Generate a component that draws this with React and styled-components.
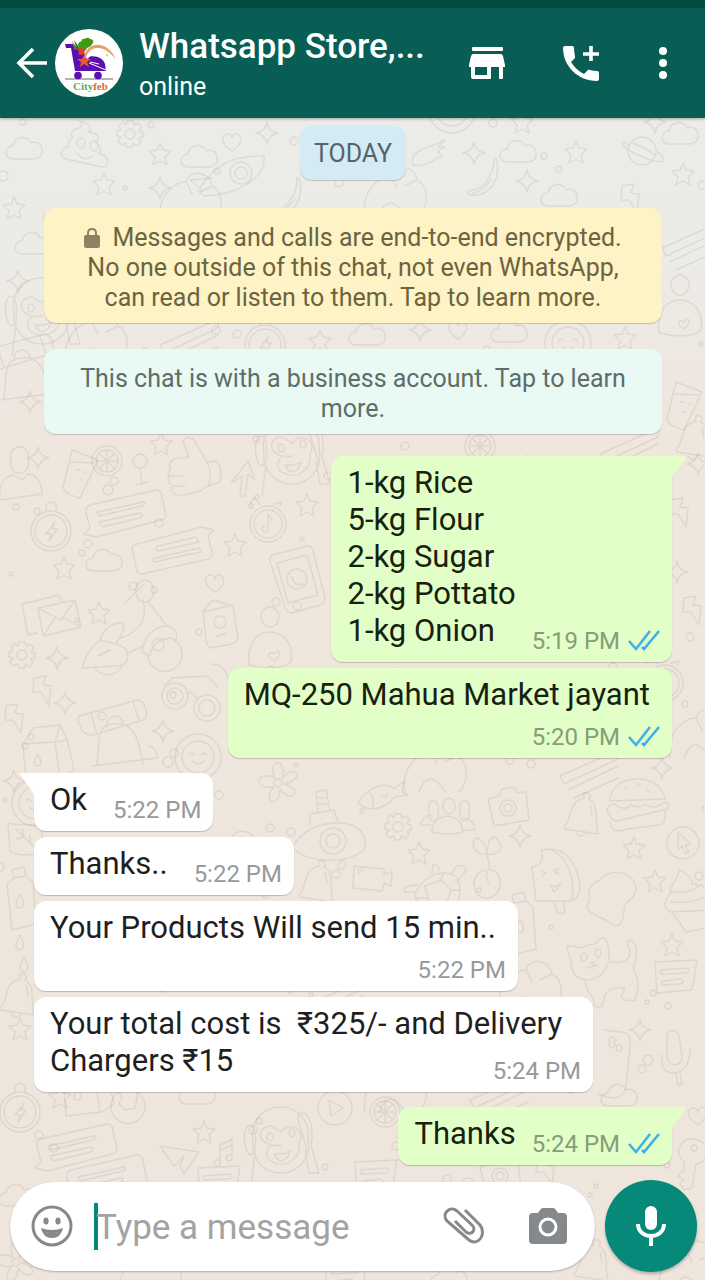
import React from "react";
import styled, { createGlobalStyle } from "styled-components";

const GlobalStyle = createGlobalStyle`
  * { box-sizing: border-box; }
  body { margin: 0; font-family: Roboto, "Noto Sans", sans-serif; }
  button { font: inherit; color: inherit; background: none; border: 0; padding: 0; cursor: pointer; }
  svg { display: block; }
`;

const Screen = styled.div`
  display: flex;
  flex-direction: column;
  min-height: 100vh;
`;

const Header = styled.header`
  position: relative;
  z-index: 1;
  display: flex;
  align-items: center;
  height: 118px;
  padding: 0 16px;
  border-top: 8px solid #044c42;
  background: #085e54;
  color: #fff;
  box-shadow: 0 1px 3px rgba(0, 0, 0, 0.3);
`;

const IconButton = styled.button`
  display: grid;
  place-items: center;
  flex: none;
  width: ${(p) => p.$w}px;
  height: 48px;
`;

const Avatar = styled.svg`
  flex: none;
  width: 68px;
  height: 68px;
  margin-left: 8px;
`;

const Contact = styled.div`
  flex: 1;
  min-width: 0;
  margin-left: 16px;
  padding-top: 4px;
`;

const Name = styled.h1`
  margin: 0;
  font-size: 35px;
  font-weight: 500;
  line-height: 44px;
  white-space: nowrap;
`;

const Presence = styled.p`
  margin: 0;
  font-size: 25px;
  line-height: 36px;
`;

const Actions = styled.div`
  display: flex;
  gap: 46px;
  margin-right: 14px;
`;

const Main = styled.main`
  position: relative;
  display: flex;
  flex: 1;
  flex-direction: column;
  background: linear-gradient(#ebece8 0, #ecebe6 150px, #efe6de 300px, #eee5dd 100%);
`;

const Wallpaper = styled.svg`
  position: absolute;
  inset: 0;
  width: 100%;
  height: 100%;
  fill: none;
  stroke: #8c8478;
  stroke-opacity: 0.16;
  stroke-width: 1.4;
  stroke-linejoin: round;
  stroke-linecap: round;
`;

const Thread = styled.section`
  position: relative;
  display: flex;
  flex: 1;
  flex-direction: column;
  padding: 8px 33px 15px 34px;
`;

const DateChip = styled.time`
  align-self: center;
  padding: 13px 14px 11px;
  border-radius: 12px;
  background: #d4eaf4;
  color: #55636a;
  font-size: 25px;
  line-height: 30px;
  box-shadow: 0 1px 1px rgba(0, 0, 0, 0.18);
`;

const Notice = styled.button`
  margin: ${(p) => p.$top}px 10px 0;
  padding: 15px 28px 10px;
  border-radius: 12px;
  background: ${(p) => p.$bg};
  color: ${(p) => p.$color};
  font-size: 25px;
  line-height: 30px;
  text-align: center;
  box-shadow: 0 1px 1px rgba(0, 0, 0, 0.18);
  svg { display: inline-block; margin-right: 12px; vertical-align: -2px; }
`;

const Bubble = styled.article`
  position: relative;
  display: ${(p) => (p.$layout === "wrapped" ? "flow-root" : "flex")};
  flex-direction: ${(p) => (p.$layout === "stacked" ? "column" : "row")};
  align-items: flex-end;
  align-self: ${(p) => (p.$out ? "flex-end" : "flex-start")};
  gap: ${(p) => (p.$layout === "stacked" ? 4 : p.$out ? 16 : 26)}px;
  max-width: 559px;
  margin-top: ${(p) => (p.$first ? 15 : 6)}px;
  padding: 8px 12px 7px 16px;
  border-radius: 12px;
  border-top-${(p) => (p.$out ? "right" : "left")}-radius: ${(p) => (p.$first ? 0 : 12)}px;
  background: ${(p) => (p.$out ? "#e1ffc7" : "#fff")};
  color: ${(p) => (p.$out ? "#18210f" : "#1f1f1f")};
  font-size: 31px;
  line-height: 37px;
  box-shadow: 0 1px 1px rgba(0, 0, 0, 0.2);
`;

const Tail = styled.svg`
  position: absolute;
  top: 0;
  ${(p) => (p.$out ? "right" : "left")}: -14px;
  width: 15px;
  height: 22px;
  fill: ${(p) => (p.$out ? "#e1ffc7" : "#fff")};
  transform: ${(p) => (p.$out ? "none" : "scaleX(-1)")};
`;

const Text = styled.p`
  display: ${(p) => (p.$layout === "wrapped" ? "inline" : "block")};
  margin: 0 0 6px;
  padding-right: ${(p) => (p.$layout === "stacked" ? 10 : 0)}px;
  white-space: pre-wrap;
`;

const Meta = styled.footer`
  display: flex;
  flex: none;
  float: right;
  align-items: center;
  gap: 8px;
  margin-top: ${(p) => (p.$layout === "wrapped" ? 15 : 0)}px;
  color: ${(p) => (p.$out ? "#869d78" : "#999")};
  font-size: 24px;
  line-height: 28px;
  white-space: nowrap;
`;

const Messages = styled.div`
  display: flex;
  flex-direction: column;
  padding-top: 7px;
`;

const Composer = styled.form`
  position: relative;
  display: flex;
  align-items: center;
  gap: 10px;
  padding: 0 8px 8px 10px;
`;

const Field = styled.div`
  display: flex;
  flex: 1;
  align-items: center;
  min-width: 0;
  height: 89px;
  padding: 0 28px 0 19px;
  border-radius: 45px;
  background: #fff;
  box-shadow: 0 1px 2px rgba(0, 0, 0, 0.25);
`;

const Caret = styled.span`
  flex: none;
  width: 4px;
  height: 47px;
  margin: 0 -2px 0 20px;
  background: #078576;
`;

const MessageInput = styled.input`
  flex: 1;
  min-width: 0;
  height: 48px;
  padding: 2px 0 0;
  border: 0;
  outline: 0;
  background: none;
  color: #1f1f1f;
  font: 35px Roboto, sans-serif;
  &::placeholder { color: #a3a3a3; opacity: 1; }
`;

const Attachments = styled.div`
  display: flex;
  gap: 44px;
`;

const MicButton = styled.button`
  display: grid;
  place-items: center;
  flex: none;
  width: 92px;
  height: 92px;
  border-radius: 50%;
  background: #068979;
  box-shadow: 0 2px 3px rgba(0, 0, 0, 0.25);
`;

/* Line drawings of the wallpaper, each centred on 0,0. */
const doodles = {
  star: "M0-11 3-4 11-3 5 3 7 11 0 7-7 11-5 3-11-3-3-4Z",
  sparkle: "M0-11Q1-2 11 0 2 1 0 11-1 2-11 0-2-1 0-11Z",
  heart: "M0 9C-14 0-10-9-4-8-1-8 0-4 0-4 1-8 4-10 7-7 12-1 5 6 0 9Z",
  cloud: "M-13 10C-22 8-20-3-12-3-11-12 2-15 6-6 13-9 18-3 17 3 17 8 12 10 8 10Z",
  gear: "M-3-13H3L4-9 8-11 12-7 9-3 13-2V3L9 4 11 8 7 12 3 9 2 13H-3L-4 9-8 11-12 7-9 3-13 2V-3L-9-4-11-8-7-12-4-9ZM5 0A5 5 0 1 1-5 0 5 5 0 1 1 5 0",
  poop: "M-4-26C4-24 10-18 4-15 14-15 16-9 12-4 18-2 17 4 15 7 26 8 26 20 18 20L-18 12C-26 8-22 0-15 0-18-6-12-9-11-9-16-16-8-18-5-19-1-20-2-24-4-26ZM-7-4A4 5 0 1 0 1-4 4 5 0 1 0-7-4M6-1A4 5 0 1 0 14-1 4 5 0 1 0 6-1M-7 6Q0 16 8 9",
  rocket: "M-42 18C-25-10-5-18 24-17 26 5-2 22-36 23ZM12 0A11 11 0 1 1-10 0 11 11 0 1 1 12 0M7 0A6 6 0 1 1-5 0 6 6 0 1 1 7 0M-28 5-50 7-38 17",
  planet: "M14 0A14 14 0 1 1-14 0 14 14 0 1 1 14 0M-13-6C-24-13-22-5-8 2 8 10 22 14 21 7 20 3 14 0 14 0M-11-9C-2-5 8 0 13 4",
  eggplant: "M-15 11C-20-2-2-6 6-9L17-14 10-7 17-7 10-3 14 2C6 4 0 14-15 11Z",
  banana: "M12-20C12 0 0 12-14 13-16 17-10 18-4 17 12 14 19-4 14-20ZM10 1Q0 13-10 16",
  person: "M8-22A9 10 0 1 1-9-22 9 10 0 1 1 8-22M-20 18C-22 0-14-6-6-7L2-2 8-8C18-8 22 4 22 12Z",
  cup: "M-8-20 18-10 0 28Q-16 24-17 17ZM-10-8 14-7M-3 0H0M4 2H6M0 10H2",
  lemon: "M15 0A15 15 0 1 1-15 0 15 15 0 1 1 15 0M11 0A11 11 0 1 1-11 0 11 11 0 1 1 11 0M0-11V11M-11 0H11M-8-8 8 8M-8 8 8-8",
  pin: "M7-7A7 7 0 1 1-7-7 7 7 0 1 1 7-7M0 0 2 16M-4 17 8 14",
  thumb: "M-20 0C-25-8-17-13-8-12L-2-13-8-28C-4-36 4-32 7-23L16-8 26-9Q32 0 29 12L17 16 9 21-8 25C-18 26-22 20-18 16-25 12-24 6-20 6-24 4-23 0-20 0ZM-19 6H-8M-17 16H-6M16-8Q22 4 17 16",
  arrow: "M-4 18-2-2-13 5 4-17 11 2 4-4 1 18Z",
  compass: "M20 0A20 20 0 1 1-20 0 20 20 0 1 1 20 0M16 0A16 16 0 1 1-16 0 16 16 0 1 1 16 0M4-9-5 3H0L-2 10 6-2H1ZM-5-19V-26Q0-32 5-26V-19",
  speech: "M-34-12 32-27Q38-27 38-20L42-2Q42 2 37 3L-28 20-40 17-34 11-38-4Q-39-10-34-12ZM-27-5Q8-12 18-15 24-14 18-11L-25-1ZM-25 5 16-4Q20-2 16 1L-22 10Z",
  clock: "M18 0A18 18 0 1 1-18 0 18 18 0 1 1 18 0M14 0A14 14 0 1 1-14 0 14 14 0 1 1 14 0M0-10V5A3 3 0 1 1-3 2M0-10 4-4M-8-20-14-26-18-20M6-20 14-22 12-18",
  tablet: "M-24-26 10-35Q15-35 16-30L28 16Q28 22 24 24L-6 32Q-10 32-12 26L-27-20Q-28-25-24-26ZM-20-18 10-26 21 14-9 22ZM10-2A10 10 0 1 1-10-2 10 10 0 1 1 10-2M-5-4Q-2 6 6 3",
  envelope: "M-17-10 20-18 26 9-12 18ZM-17-10 6 2 20-18M-12 18 0 0M26 9 8-1M-18 15-27 17-33-14 4-23 7-16",
  scooter: "M-48 28C-46 18-38 6-30 0L-14 4Q-2 8-2 14-2 26-14 26ZM-30 0Q-24-18-8-17-4-14-8-8L-14 4M-4 14 14 6M-10-2C10-8 18-20 13-40M18-38C26-30 32-20 36-14 46-12 48-8 46 0L40-2Q22 0 20 16L12 12Q16-12 36-14M-8 26A16 16 0 0 1-36 27M44 0A17 17 0 1 1 18 16M34 4A6 6 0 1 0 34 5M6-46A9 11 0 1 1 20-40 9 11 0 0 1 6-46M-32 16-20 10M-6-36 14-56",
  card: "M-17-13-7-24 13-18 18 15Q17 18 12 20L-10 24Q-13 22-14 16ZM-16-12 8-18M6-2A6 6 0 1 1-6-2 6 6 0 1 1 6-2M-4 13 6 9",
  group: "M9-31A9 10 0 1 1-9-31 9 10 0 1 1 9-31M-21 17C-23-5-14-16 0-16S24-4 21 14Q10 24-21 17ZM4 13C-5 8-1 2 4 6 7 0 14 4 4 13",
  bolt: "M-8-12 4-14 1-5 9-4 7 15-1 2-9 2Z",
  glasses: "M-8 0A13 13 0 1 1-34 0 13 13 0 1 1-8 0M24 12A13 13 0 1 1-2 12 13 13 0 1 1 24 12M-10-3Q-4-6 1 3M-32-10-24-18 12-20 22-8M16-32C32-32 34-14 34 6M-13 0A8 8 0 1 1-29 0 8 8 0 1 1-13 0M19 12A8 8 0 1 1 3 12 8 8 0 1 1 19 12",
  backpack: "M-36-18 22-34Q29-34 31-24 33-17 28-14L-22 1Q-32 2-35-8-38-14-36-18ZM-24-20-18 0M18-32 24-14M-18 30C-15 2-18-8-2-10S22-6 28 30M-22 32 42 24Q42 14 34 12M-8-10A8 8 0 0 1 8-10",
  milk: "M-25-8-15-24 12-27 20-10 26 18 14 26-22 30ZM-25-8 7-10 20-12M7-10 12 26M12-27 7-10M-10 3Q-18 14-10 14-4 12-10 3",
  smiley: "M23 0A23 23 0 1 1-23 0 23 23 0 1 1 23 0M16 0A16 16 0 1 1-16 0 16 16 0 1 1 16 0M-9-2Q-7-6-4-2M4-2Q7-6 9-2M-6 4Q0 10 6 4",
  flower: "M-3-5C-12-24 10-26 4-5 18-20 28-4 6 1 26 6 14 22 2 6 2 26-18 20-4 4-24 8-24-14-3-5ZM4 0A4 4 0 1 1-4 0 4 4 0 1 1 4 0",
  saucer: "M-38 10C-30-6-12-16 10-15S38 0 34 12C18 26-20 26-38 10ZM16 3A13 13 0 1 1-10 3 13 13 0 1 1 16 3M10 3A7 7 0 1 1-4 3 7 7 0 1 1 10 3M-20-12V-24L4-28 8-15M-12-26-14-46-4-48 0-27M-13-40H-4M-12-34H-3",
  leaf: "M-14-14C2-10 14-16 20-8V16C8 18-4 20-12 14ZM-6-8 14 12M2 0 0-8M2 0-6 2M8 7V-2",
  bottle: "M-13-16-6-22-8-30 4-33 6-24 13-18 16 24-8 30ZM0-6Q-8 8 0 8 7 6 0-6M-6-22 6-24",
  drop: "M0-8Q-8 6 0 7 7 5 0-8Z",
  bell: "M-16 10C-6 0-14-14 4-19Q2-26 8-24 12-22 9-18C20-12 14 2 18 17L-15 12ZM-4 16Q0 22 5 17M10-12 12-2",
  wrench: "M8-14A17 17 0 1 1-10-14L-7-9-10-2-4 4 6 2 8-8Z",
  monkey: "M27-2A28 28 0 1 1-28 0 28 28 0 1 1 27-2M0 4C-22 8-28-14-10-15L0-9C8-20 26-12 18 2 20 20 2 28-10 20-17 16-14 8-10 4M-8-4A3 4 0 1 0-14-4 3 4 0 1 0-8-4M14-8A3 4 0 1 0 8-8 3 4 0 1 0 14-8M-7 13Q4 14 9 10 6 22-3 19ZM-28 12C-34 20-40-4-34-14-28-20-24-10-26 10M26 10C24-4 10-30 22-28 32-26 32-4 30 4M-26 12-30 44M30 4 38 32 28 32 24 10",
  play: "M17 0A17 17 0 1 1-17 0 17 17 0 1 1 17 0M-6-8 8 0-4 8Z",
  plane: "M-20-14 19-8 4 14 0 6 4-4-6 6Z",
  note: "M-4 11V-8L8-14V5M-4-3 8-8M-4 11A3 3 0 1 1-6 7M8 5A3 3 0 1 1 6 2",
  fish: "M-22 6C-12-10 4-16 14-8L24-16 22-6 28-2 14 0C6 12-12 16-22 6ZM-10-4Q-4 4-8 12M0-2Q6 2 8-4",
  people: "M6-14A6 8 0 1 1-6-14 6 8 0 1 1 6-14M-17 12C-18-6 12-12 14 12Q0 16-17 12M-11-9A5 7 0 1 1-20-9 5 7 0 1 1-11-9M20-9A5 7 0 1 1 11-9 5 7 0 1 1 20-9M-18 5H-28Q-26-6-16-4M14-2Q26 0 26 10H14",
  camera: "M-20-9-9-12-6-19 6-21 9-15 18-16 21 12-14 18ZM8 0A8 8 0 1 1-8 0 8 8 0 1 1 8 0M4 0A4 4 0 1 1-4 0 4 4 0 1 1 4 0",
  burger: "M-27-4C-28-30 22-36 28-6ZM-30 4Q-26-4-20 1-12 6-6 0 2 4 8-1 18 6 27-3 34-2 30 4L-20 16Q-28 14-30 4ZM-27 16Q-26 30-10 24L22 20Q30 18 28 6M-12-18-10-16M0-22 2-20M10-15 12-14",
  plant: "M-1 8C-18 12-14 38 2 36 18 34 18 8 4 8L1-8C-18-8-14-26-8-24 2-18 0-8 1-8 2-30 12-26 12-20 18-18 16-6 1-8M2 8Q-2 16 4 22",
  video: "M-18-12 12-9V-4L20-6 19 8 12 5 10 13-19 10ZM-10-6A2 2 0 1 0-12-5",
  turtle: "M-22 12C-20-6 0-16 14-12 26-8 24 12 18 22H-16ZM-22 6H-32Q-36 0-20-1M14-12 20-20Q32-22 28-14L20-4M-5-12-4-22Q4-20 3-12M-12 0 4-6 14 4 10 16H-8ZM-22 12-10 12M4-6 6-12M14 4H23",
  icecream: "M-20 20-24-14Q-14-16-15-20-12-22-15-30C-4-36 12-24 16 0 18 12 16 18 14 20ZM-6-32C14-32 24-8 24 8 22 16 18 20 14 20M-14-10-10-8-14-5M-2-10 2-12M-1-9 3-7M-7 4Q0 8 5 2M-5 5Q-2 16 3 4M-2 20 2 32Q8 34 9 30L7 20",
  blob: "M-12-20C-2-34 26-28 24-8 20 2 12 0 12 12 10 30 2 28-6 20-26 12-28 8-22 0-26-12-18-18-12-20Z",
  pointer: "M16 0A16 16 0 1 1-16 0 16 16 0 1 1 16 0M-5-10 8 1 2 2 6 9 2 10-1 3-5 7Z",
  cupcake: "M-25 0C-24-8-16-12-20-14L-10-34Q4-26 2-20 20-18 20-8 28 0 20 6L-20 8Q-26 4-25 0ZM-18 8-4 28 26 22M-18-12Q0-10 12-20M-20-2Q0 0 18-8",
  cat: "M-26-12Q-32-26-28-26-22-26-16-24-8-28-2-28 4-36 8-34 12-28 12-14 10 4-8 8-26 8-26-12ZM14-10C28-8 36-14 32-24Q28-32 34-32C42-28 40-12 36-4 42 6 42 18 38 28Q30 30 24 26L28 16Q16 14 8 22L6 32Q0 38-2 34L-4 26Q-10 20-12 10M-10-15A3 4 0 1 1-16-15 3 4 0 1 1-10-15M4-19A3 4 0 1 1-2-19 3 4 0 1 1 4-19M-7-9-3-10-4-6-10-4M-4-6 1-7",
  page: "M-20-14 22-16 18 10 16 14-18 17ZM-14-6 12-8Q16-5 12-3L-14-2ZM-13 5 6 3Q10 6 6 8L-13 9Z",
  controller: "M-8-32 10-30Q20-28 18-16L14 24Q12 36 0 36L-14 32M2-20A3 3 0 1 0-2-20 3 3 0 1 0 2-20M10-14A3 3 0 1 0 4-14 3 3 0 1 0 10-14",
  mic: "M-7-20Q0-26 5-18L8 4Q8 12 0 12-6 10-7 4ZM-12 2Q-14 20 0 20 16 18 16-4M2 20 4 32H8L6 20",
  key: "M10-20C24-16 20 4 8 4L4 28-4 30-8 24-4 20-10 16-4 10-4 2C-16-8-6-26 10-20ZM9-12A3 3 0 1 1 3-12 3 3 0 1 1 9-12",
  pencil: "M-30 8 24-16Q32-14 26-8L-26 16ZM-22 22 28-2M-16 30 28 10",
  leafy: "M-30 20C-34 0-20-20-4-20 0-34 20-30 22-16 34-10 34 10 24 20M-16 20Q-6-6 10 20M-4-20 2-8M22-16 10-10",
};

const placements = [
  ["cloud", 25, 149], ["poop", 84, 147], ["gear", 130, 134], ["star", 160, 154], ["star", 104, 184], ["cloud", 200, 157],
  ["heart", 232, 142], ["sparkle", 267, 133], ["rocket", 240, 173], ["cloud", 519, 152], ["star", 576, 152], ["star", 522, 122],
  ["planet", 642, 151], ["cloud", 681, 134], ["star", 683, 174], ["eggplant", 428, 154], ["sparkle", 474, 153],
  ["sparkle", 527, 181], ["banana", 482, 178], ["smiley", 452, 110], ["sparkle", 655, 122], ["leafy", 395, 196], ["sparkle", 160, 188],
  ["star", 14, 208], ["cloud", 34, 244], ["sparkle", 18, 281], ["monkey", 42, 312], ["leafy", 190, 202], ["banana", 285, 198],
  ["cloud", 560, 196], ["bolt", 630, 198], ["pencil", 692, 240], ["group", 680, 316], ["leafy", 96, 342], ["pencil", 190, 337],
  ["compass", 265, 345], ["star", 320, 341], ["cloud", 368, 335], ["sparkle", 420, 330], ["heart", 458, 330], ["cloud", 510, 332],
  ["smiley", 568, 343], ["star", 625, 338], ["backpack", 22, 368], ["sparkle", 30, 402], ["cup", 684, 402], ["bell", 692, 440],
  ["person", 20, 482], ["cup", 80, 470], ["lemon", 107, 461], ["sparkle", 38, 458], ["pin", 140, 468], ["thumb", 191, 470],
  ["arrow", 244, 478], ["monkey", 292, 452], ["compass", 51, 531], ["speech", 124, 517], ["speech", 174, 547, 180], ["cloud", 105, 561],
  ["star", 64, 568], ["star", 235, 545], ["clock", 268, 524], ["star", 307, 505], ["tablet", 297, 581], ["heart", 215, 583],
  ["envelope", 55, 618], ["scooter", 130, 640], ["card", 220, 624], ["group", 270, 648], ["star", 99, 613], ["gear", 22, 655],
  ["sparkle", 57, 658], ["sparkle", 65, 703], ["bolt", 42, 690], ["glasses", 196, 696], ["backpack", 115, 734], ["milk", 48, 752],
  ["bolt", 14, 718], ["sparkle", 163, 731], ["smiley", 198, 757], ["pencil", 630, 446], ["lemon", 480, 446], ["star", 161, 444],
  ["sparkle", 698, 464], ["bolt", 679, 512], ["bolt", 692, 610], ["sparkle", 677, 572], ["clock", 665, 683], ["leafy", 700, 738],
  ["sparkle", 14, 781], ["smiley", 35, 803], ["flower", 278, 783], ["saucer", 330, 838], ["leaf", 22, 837], ["bottle", 20, 900],
  ["drop", 20, 943], ["drop", 24, 965], ["bell", 16, 998], ["star", 20, 1029], ["compass", 20, 1112], ["star", 60, 1097],
  ["wrench", 129, 1106], ["star", 204, 1132], ["speech", 75, 1151], ["monkey", 281, 1141], ["play", 335, 1108], ["plane", 180, 1160],
  ["note", 224, 1153], ["milk", 88, 1086], ["cloud", 198, 1094], ["leafy", 395, 1092], ["speech", 105, 1182], ["page", 218, 1182],
  ["fish", 380, 797], ["people", 449, 820], ["camera", 508, 808], ["bell", 580, 817], ["burger", 637, 805], ["gear", 398, 827],
  ["star", 419, 853], ["sparkle", 520, 836], ["plant", 486, 862], ["video", 372, 878], ["turtle", 437, 886], ["icecream", 556, 881],
  ["blob", 612, 900], ["star", 634, 848], ["star", 655, 881], ["pointer", 683, 843], ["cupcake", 690, 904], ["cat", 597, 972],
  ["page", 675, 976], ["star", 672, 945], ["controller", 612, 1062], ["mic", 674, 1053], ["sparkle", 640, 1030], ["sparkle", 662, 768],
  ["leafy", 435, 772], ["pencil", 590, 768], ["leafy", 530, 990], ["bottle", 520, 925], ["lemon", 385, 1112], ["key", 688, 1160],
  ["heart", 698, 1116], ["cloud", 620, 1096], ["pencil", 500, 1092], ["page", 375, 1176], ["camera", 500, 1176], ["bolt", 545, 1170],
  ["cloud", 18, 1196], ["flower", 16, 1262], ["bell", 590, 1264], ["leafy", 150, 1276], ["cloud", 450, 1278], ["page", 345, 1276],
  ["leafy", 235, 860], ["pencil", 335, 998], ["bell", 315, 885], ["leafy", 690, 1270],
];

const dots = Array.from({ length: 330 }, (_, i) => ({
  x: (i * 137 + 23) % 705,
  y: 122 + ((i * 211 + (i % 7) * 31) % 1156),
  r: 2 + (i % 3) + (i % 5 === 0 ? 1 : 0),
})).filter((d) => placements.every(([, x, y]) => Math.hypot(d.x - x, d.y - y) > 21));

function ChatWallpaper() {
  return (
    <Wallpaper viewBox="0 118 705 1162" preserveAspectRatio="xMidYMin slice" aria-hidden="true">
      {placements.map(([name, x, y, turn = 0], i) => (
        <path key={i} d={doodles[name]} transform={`translate(${x} ${y}) rotate(${turn})`} />
      ))}
      {dots.map((d, i) => (
        <circle key={i} cx={d.x} cy={d.y} r={d.r} />
      ))}
    </Wallpaper>
  );
}

function StoreLogo() {
  return (
    <Avatar viewBox="0 0 68 68" role="img" aria-label="Cityfeb">
      <circle cx="34" cy="34" r="34" fill="#fff" />
      <path d="M10 50H58" stroke="#999" strokeWidth="1.5" />
      <path d="M10 15H18L20 21 28 20 31 29C38 25 48 28 50 35L51 42H20L16 19H11Z" fill="#5b0fb0" />
      <circle cx="23" cy="46.500" r="3.800" fill="#5b0fb0" />
      <circle cx="43" cy="46.500" r="3.800" fill="#5b0fb0" />
      <path d="M23 16C24 11 27 14 27 10 30 11 32 7 35 10 39 10 39 14 37 15 36 19 32 17 31 21L25 20Z" fill="#3f9b16" />
      <path d="M17 12 21 18 19 11 24 18 26 21H20Z" fill="#397b24" />
      <path d="M23 19 31 20 28 26 24 26Z" fill="#e23b2f" />
      <path d="M29 30C30 12 53 10 61 31 54 20 37 13 31 29Z" fill="#e7a06c" />
      <path d="M31 29C34 17 46 17 53 23 56 26 58 28 59 30 51 24 38 20 33 30Z" fill="#fff" />
      <path d="M29 26 31 30 36 30 32 33 34 38 29 35 25 38 26 33 22 30 27 30Z" fill="#ee5a24" />
      <path d="M34 34 51 41M35 33 44 35" stroke="#fff" strokeWidth="1" />
      <path d="M52 22H54M51 26H53" stroke="#e7bd3c" strokeWidth="1.500" />
      <text x="18" y="61" fontFamily="Liberation Serif, serif" fontWeight="700" fontSize="11">
        <tspan fill="#6aa84a">City</tspan>
        <tspan fill="#d9672b">feb</tspan>
      </text>
    </Avatar>
  );
}

const Ticks = () => (
  <svg width="32" height="22" viewBox="0 0 32 22" fill="none" stroke="#41b1e1" strokeWidth="2.600" role="img" aria-label="Read">
    <path d="M1 11 8 19 22 1M14 17 16 19 31 1" />
  </svg>
);

const messages = [
  { out: true, first: true, text: "1-kg Rice\n5-kg Flour\n2-kg Sugar\n2-kg Pottato\n1-kg Onion", time: "5:19 PM" },
  { out: true, layout: "stacked", text: "MQ-250 Mahua Market jayant", time: "5:20 PM" },
  { first: true, text: "Ok", time: "5:22 PM" },
  { text: "Thanks..", time: "5:22 PM" },
  { layout: "stacked", text: "Your Products Will send 15 min..", time: "5:22 PM" },
  { layout: "wrapped", text: "Your total cost is  ₹325/- and Delivery Chargers ₹15", time: "5:24 PM" },
  { out: true, first: true, text: "Thanks", time: "5:24 PM" },
];

function Message({ out, first, layout, text, time }) {
  return (
    <Bubble $out={out} $first={first} $layout={layout}>
      {first && (
        <Tail $out={out} viewBox="0 0 15 22" aria-hidden="true">
          <path d="M0 0H13Q16 0 14 3L1 21H0Z" />
        </Tail>
      )}
      <Text $layout={layout}>{text}</Text>
      <Meta $out={out} $layout={layout}>
        <time>{time}</time>
        {out && <Ticks />}
      </Meta>
    </Bubble>
  );
}

export default function App() {
  return (
    <Screen>
      <GlobalStyle />
      <Header>
        <IconButton $w={31} type="button" aria-label="Back">
          <svg width="31" height="32" viewBox="0 0 31 32" fill="none" stroke="#fff" strokeWidth="3.600">
            <path d="M31 16H3M17 2 3 16 17 30" />
          </svg>
        </IconButton>
        <StoreLogo />
        <Contact>
          <Name>Whatsapp Store,...</Name>
          <Presence>online</Presence>
        </Contact>
        <Actions>
          <IconButton $w={48} type="button" aria-label="Shop">
            <svg width="36" height="34" viewBox="0 0 36 34" fill="#fff">
              <rect x="3" y="1" width="31" height="4" rx="1" />
              <path fillRule="evenodd" d="M4 8H32Q33 8 34 10L36 19V21H34V32Q34 33 33 33H31Q30 33 30 32V21H22V32Q22 33 21 33H4Q2 33 2 31V21H0V19L2 10Q3 8 4 8ZM6 21V29H18V21Z" />
            </svg>
          </IconButton>
          <IconButton $w={48} type="button" aria-label="Add call">
            <svg width="36" height="35" viewBox="0 0 36 35">
              <path fill="#fff" d="M2 0H9Q11 0 11 2 11 6 12 10 12 11 12 12L8 16Q13 24 21 28L25 24Q26 23 27 24 30 25 34 25 36 25 36 27V33Q36 35 34 35C15 35 0 20 0 2Q0 0 2 0Z" />
              <path d="M28 0V15M20 8H36" stroke="#fff" strokeWidth="3.600" />
            </svg>
          </IconButton>
          <IconButton $w={24} type="button" aria-label="More options">
            <svg width="10" height="32" viewBox="0 0 10 32" fill="#fff">
              <circle cx="5" cy="4" r="4" />
              <circle cx="5" cy="16" r="4" />
              <circle cx="5" cy="28" r="4" />
            </svg>
          </IconButton>
        </Actions>
      </Header>

      <Main>
        <ChatWallpaper />
        <Thread>
          <DateChip>TODAY</DateChip>
          <Notice type="button" $top={28} $bg="#fef3c5" $color="#6b643f">
            <svg width="16" height="20" viewBox="0 0 16 20" aria-hidden="true">
              <rect y="7" width="16" height="13" rx="2" fill="#8c8365" />
              <path d="M4 8V5Q4 1 8 1 12 1 12 5V8" fill="none" stroke="#8c8365" strokeWidth="2" />
            </svg>
            Messages and calls are end-to-end encrypted. No one outside of this chat, not even WhatsApp, can read or listen to them. Tap to learn more.
          </Notice>
          <Notice type="button" $top={26} $bg="#e9faf5" $color="#5d6d68">
            This chat is with a business account. Tap to learn more.
          </Notice>
          <Messages>
            {messages.map((m, i) => (
              <Message key={i} {...m} />
            ))}
          </Messages>
        </Thread>

        <Composer onSubmit={(e) => e.preventDefault()}>
          <Field>
            <IconButton $w={45} type="button" aria-label="Emoji">
              <svg width="42" height="42" viewBox="0 0 42 42" fill="#85898c">
                <circle cx="21" cy="21" r="19" fill="none" stroke="#85898c" strokeWidth="3" />
                <ellipse cx="15" cy="16" rx="2.600" ry="3.600" />
                <ellipse cx="27" cy="16" rx="2.600" ry="3.600" />
                <path fillRule="evenodd" d="M10 23Q21 27 32 23 30 33 21 33T10 23ZM14 27Q21 29 28 27 26 28 21 28T14 27Z" />
              </svg>
            </IconButton>
            <Caret aria-hidden="true" />
            <MessageInput type="text" aria-label="Message" placeholder="Type a message" />
            <Attachments>
              <IconButton $w={42} type="button" aria-label="Attach">
                <svg width="42" height="38" viewBox="0 0 42 38" fill="none" stroke="#85898c" strokeWidth="3">
                  <path d="M22 3 37 18C44 27 35 40 26 33L4 14C-2 7 7-2 14 4L29 18C34 23 28 29 23 25L12 14" />
                </svg>
              </IconButton>
              <IconButton $w={38} type="button" aria-label="Camera">
                <svg width="38" height="36" viewBox="0 0 38 36">
                  <path fill="#85898c" d="M14 0H24Q26 0 27 2L29 5H34Q38 5 38 9V32Q38 36 34 36H4Q0 36 0 32V9Q0 5 4 5H9L11 2Q12 0 14 0Z" />
                  <circle cx="19" cy="19" r="8" fill="none" stroke="#fff" strokeWidth="3" />
                </svg>
              </IconButton>
            </Attachments>
          </Field>
          <MicButton type="button" aria-label="Record voice message">
            <svg width="30" height="40" viewBox="0 0 30 40" fill="none" stroke="#fff">
              <rect x="9" y="0" width="12" height="24" rx="6" fill="#fff" stroke="none" />
              <path d="M2 18C2 34 28 34 28 18M15 30V40" strokeWidth="4" />
            </svg>
          </MicButton>
        </Composer>
      </Main>
    </Screen>
  );
}
